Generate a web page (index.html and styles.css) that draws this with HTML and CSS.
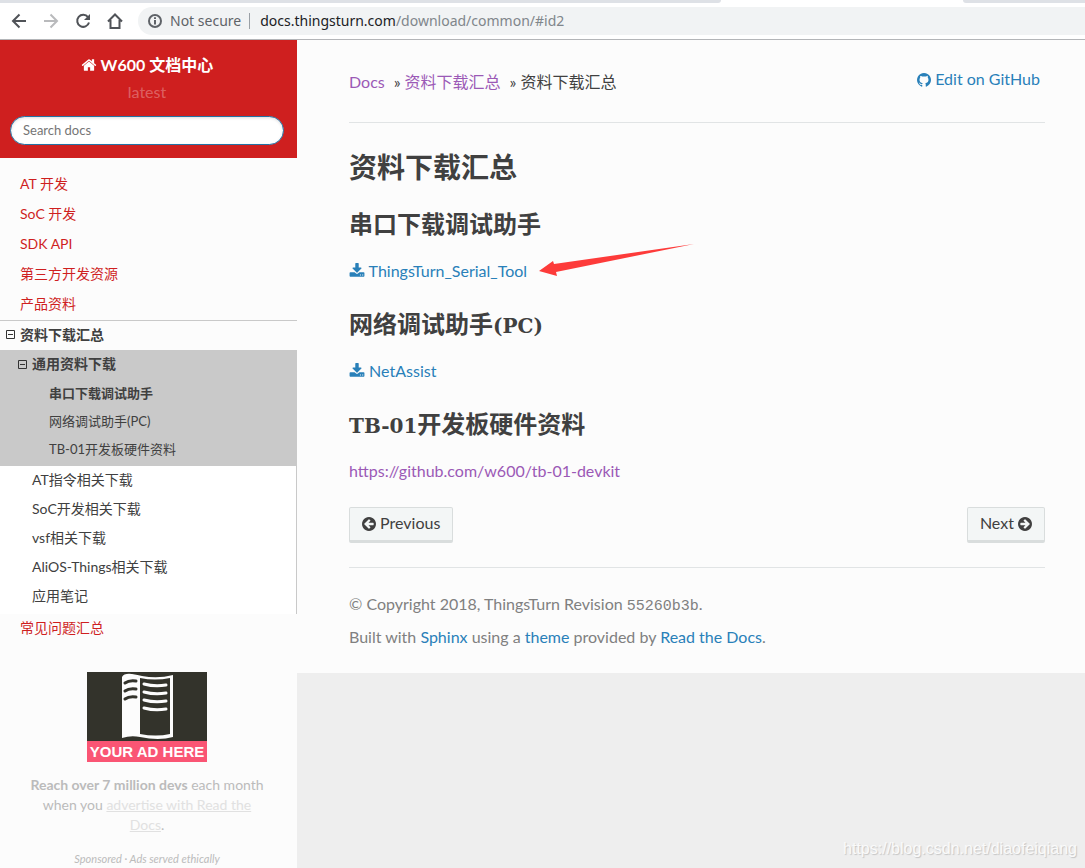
FILE: index.html
```html
<!DOCTYPE html>
<html lang="zh-CN">
<head>
<meta charset="utf-8">
<title>资料下载汇总 — W600 文档中心</title>
<link rel="stylesheet" href="styles.css">
</head>
<body>
<svg class="defs" aria-hidden="true">
  <symbol id="download" viewBox="0 0 1792 1792"><path d="M1344 1344q0-26-19-45t-45-19-45 19-19 45 19 45 45 19 45-19 19-45zm256 0q0-26-19-45t-45-19-45 19-19 45 19 45 45 19 45-19 19-45zm128-224v320q0 40-28 68t-68 28h-1472q-40 0-68-28t-28-68v-320q0-40 28-68t68-28h465l135 136q58 56 136 56t136-56l136-136h464q40 0 68 28t28 68zm-325-569q17 41-14 70l-448 448q-18 19-45 19t-45-19l-448-448q-31-29-14-70 17-39 59-39h256v-448q0-26 19-45t45-19h256q26 0 45 19t19 45v448h256q42 0 59 39z"/></symbol>
  <symbol id="circle-left" viewBox="128 128 1536 1536"><path d="M1408 960v-128q0-26-19-45t-45-19h-502l189-189q19-19 19-45t-19-45l-91-91q-18-18-45-18t-45 18l-362 362-91 91q-18 18-18 45t18 45l91 91 362 362q18 18 45 18t45-18l91-91q18-18 18-45t-18-45l-189-189h502q26 0 45-19t19-45zm256-64q0 209-103 385.5t-279.5 279.5-385.5 103-385.5-103-279.5-279.5-103-385.5 103-385.5 279.5-279.5 385.5-103 385.5 103 279.5 279.5 103 385.5z"/></symbol>
  <symbol id="minus" viewBox="0 0 9 9"><path d="M.5.5h8v8h-8zM2 4.500h5" fill="none" stroke="currentColor"/></symbol>
</svg>

<header class="browser">
  <div class="tabs"><span class="tab-left"></span><span class="tab-right"></span></div>
  <div class="toolbar">
    <button class="tool" aria-label="Back"><svg viewBox="0 0 16 16"><path d="M15 8H2.500M8.500 1.500 2 8l6.500 6.500"/></svg></button>
    <button class="tool tool-off" aria-label="Forward" disabled><svg viewBox="0 0 16 16"><path d="M1 8h12.500M7.500 1.500 14 8l-6.500 6.500"/></svg></button>
    <button class="tool" aria-label="Reload"><svg viewBox="0 0 16 16"><path d="M13 4.200A6 6 0 1 0 14 9.500"/><path class="solid" d="M15 1v6H9z"/></svg></button>
    <button class="tool" aria-label="Home"><svg viewBox="0 0 16 16"><path d="M1 8.500 8 1.500l7 7M3.500 7v8h9V7"/></svg></button>
    <div class="address">
      <svg class="info" viewBox="0 0 14 14"><circle cx="7" cy="7" r="6"/><path d="M7 6v4.500M7 3.300v1.700"/></svg>
      <span>Not secure</span>
      <span class="bar"></span>
      <span class="url"><b>docs.thingsturn.com</b>/download/common/#id2</span>
    </div>
  </div>
</header>

<div class="page">
  <nav class="side">
    <div class="side-head">
      <a class="brand" href="#"><svg class="home" viewBox="0 0 1792 1792"><path d="M1472 992v480q0 26-19 45t-45 19h-384v-384h-256v384h-384q-26 0-45-19t-19-45v-480q0-1 .5-3t.5-3l575-474 575 474q1 2 1 6zm223-69l-62 74q-8 9-21 11h-3q-13 0-21-7l-692-577-692 577q-12 8-24 7-13-2-21-11l-62-74q-8-10-7-23.500t11-21.500l719-599q32-26 76-26t76 26l244 204v-195q0-14 9-23t23-9h192q14 0 23 9t9 23v408l219 182q10 8 11 21.500t-7 23.500z"/></svg> W600 文档中心</a>
      <div class="version">latest</div>
      <input class="search" type="text" placeholder="Search docs" aria-label="Search docs">
    </div>
    <ul class="menu">
      <li><a href="#">AT 开发</a></li>
      <li><a href="#">SoC 开发</a></li>
      <li><a href="#">SDK API</a></li>
      <li><a href="#">第三方开发资源</a></li>
      <li><a href="#">产品资料</a></li>
      <li class="current">
        <a href="#"><svg class="fold"><use href="#minus"/></svg>资料下载汇总</a>
        <div class="open">
          <a class="level2" href="#"><svg class="fold"><use href="#minus"/></svg>通用资料下载</a>
          <ul class="level3">
            <li><a class="here" href="#">串口下载调试助手</a></li>
            <li><a href="#">网络调试助手(PC)</a></li>
            <li><a href="#">TB-01开发板硬件资料</a></li>
          </ul>
        </div>
        <ul class="rest">
          <li><a href="#">AT指令相关下载</a></li>
          <li><a href="#">SoC开发相关下载</a></li>
          <li><a href="#">vsf相关下载</a></li>
          <li><a href="#">AliOS-Things相关下载</a></li>
          <li><a href="#">应用笔记</a></li>
        </ul>
      </li>
      <li><a href="#">常见问题汇总</a></li>
    </ul>
    <div class="ad">
      <div class="ad-image">
        <svg viewBox="0 0 120 69"><path fill="#fcfcfc" d="M35 5Q37 1 45 2q6 1 10 2 16 3 31-1v62q-14 4-33 0-9-2-18 1z"/><path fill="#33332b" d="M53 6q15 3 30 0v56q-14 3-30 0z"/><path class="ink" d="M38 11q4-3 11-2M38 19q4-3 11-2M38 27q4-3 11-2"/><path class="ink light" d="M57 12q11 3 22 1M57 20q11 3 22 1M57 28q11 3 22 1M57 36q11 3 22 1"/></svg>
        <div class="ad-label">YOUR AD HERE</div>
      </div>
      <p class="ad-text"><b>Reach over 7 million devs</b> each month when you <a href="#">advertise with Read the Docs</a>.</p>
      <p class="ad-note">Sponsored · Ads served ethically</p>
    </div>
  </nav>

  <div class="main">
    <main class="content">
      <div class="crumbs">
        <div><a class="visited" href="#">Docs</a><i>»</i><a class="visited" href="#">资料下载汇总</a><i>»</i>资料下载汇总</div>
        <a class="edit" href="#"><svg class="round" viewBox="128 128 1536 1536"><path d="M896 128q209 0 385.500 103t279.500 279.500 103 385.500q0 251-146.500 451.500t-378.500 277.500q-27 5-40-7t-13-30q0-3 .5-76.500t.5-134.500q0-97-52-142 57-6 102.500-18t94-39 81-66.500 53-105 20.500-150.500q0-119-79-206 37-91-8-204-28-9-81 11t-92 44l-38 24q-93-26-192-26t-192 26q-16-11-42.500-27t-83.500-38.500-85-13.500q-45 113-8 204-79 87-79 206 0 85 20.500 150t52.500 105 80.500 67 94 39 102.500 18q-39 36-49 103-21 10-45 15t-57 5-65.500-21.500-55.500-62.500q-19-32-48.500-52t-49.500-24l-20-3q-21 0-29 4.500t-5 11.500 9 14 13 12l7 5q22 10 43.500 38t31.500 51l10 23q13 38 44 61.500t67 30 69.500 7 55.500-3.500l23-4q0 38 .5 88.500t.5 54.500q0 18-13 30t-40 7q-232-77-378.500-277.500t-146.500-451.500q0-209 103-385.500t279.500-279.500 385.500-103z"/></svg> Edit on GitHub</a>
      </div>
      <h1>资料下载汇总</h1>
      <h2>串口下载调试助手</h2>
      <p class="entry pointed"><a href="#"><svg class="dl"><use href="#download"/></svg> ThingsTurn_Serial_Tool</a>
        <svg class="arrow" viewBox="0 0 156 34"><path fill="#fd3b3a" d="M0 28 14 18l1 3L155 1 17 29l1 4z"/></svg>
      </p>
      <h2>网络调试助手<span class="slab">(PC)</span></h2>
      <p class="entry"><a href="#"><svg class="dl"><use href="#download"/></svg> NetAssist</a></p>
      <h2><span class="slab">TB-01</span>开发板硬件资料</h2>
      <p class="entry"><a class="visited" href="#">https://github.com/w600/tb-01-devkit</a></p>
      <div class="pager">
        <a class="btn" href="#"><svg class="round"><use href="#circle-left"/></svg> Previous</a>
        <a class="btn" href="#">Next <svg class="round flip"><use href="#circle-left"/></svg></a>
      </div>
      <footer class="foot">
        <p>© Copyright 2018, ThingsTurn Revision <code>55260b3b</code>.</p>
        <p>Built with <a href="#">Sphinx</a> using a <a href="#">theme</a> provided by <a href="#">Read the Docs</a>.</p>
      </footer>
    </main>
    <div class="watermark">https://blog.csdn.net/diaofeiqiang</div>
  </div>
</div>
</body>
</html>
```

FILE: styles.css
```css
* { box-sizing: border-box; }
body {
  margin: 0;
  min-height: 100vh;
  display: flex;
  flex-direction: column;
  background: #eee;
  color: #404040;
  font: 16px/24px Lato, "Noto Sans CJK SC", sans-serif;
}
a { color: #2980b9; text-decoration: none; }
p, h1, h2, ul { margin: 0; padding: 0; }
ul { list-style: none; }
svg { fill: currentColor; }
.defs { position: absolute; width: 0; height: 0; }

/* browser bar */
.browser { background: #fff; border-bottom: 1px solid #b3b5b8; overflow: hidden; }
.tabs { display: flex; justify-content: space-between; height: 3px; }
.tabs span { background: #dee1e6; }
.tab-left { width: 721px; border-bottom-right-radius: 6px; }
.tab-right { width: 122px; border-bottom-left-radius: 6px; }
.toolbar { display: flex; align-items: center; gap: 16px; padding: 4px 0 4px 11px; }
.tool { width: 16px; height: 16px; padding: 0; border: 0; background: none; color: #505358; }
.tool-off { color: #b9babc; }
.tool svg { display: block; width: 16px; height: 16px; fill: none; stroke: currentColor; stroke-width: 2; }
.tool .solid { fill: currentColor; stroke: none; }
.address {
  flex: 1;
  display: flex;
  align-items: center;
  gap: 8px;
  margin-left: -1px;
  height: 28px;
  padding-left: 10px;
  border-radius: 14px 0 0 14px;
  background: #f1f3f4;
  color: #5f6368;
  font: 14px/28px "Noto Sans", sans-serif;
}
.info { width: 14px; height: 14px; fill: none; stroke: #5f6368; stroke-width: 2; }
.bar { width: 1px; height: 16px; background: #9aa0a6; }
.url { padding-left: 2px; color: #80868b; }
.url b { font-weight: 400; color: #202124; }

.page { flex: 1; display: flex; }

/* sidebar */
.side { flex: none; width: 297px; background: #fcfcfc; font-size: 14px; }
.side-head {
  display: flex;
  flex-direction: column;
  align-items: center;
  padding: 13px 13px 13px 10px;
  background: #cf1f1f;
}
.brand { color: #fff; font-size: 16px; font-weight: 700; }
.home { width: 16px; height: 16px; vertical-align: -2px; }
.version { margin: 3px 0 12px; color: rgba(255, 255, 255, .3); font-size: 16px; }
.search {
  width: 100%;
  height: 29px;
  padding: 0 12px 2px;
  border: 1px solid #2472a4;
  border-radius: 15px;
  box-shadow: inset 0 1px 3px #ddd;
  font: 13px Lato, sans-serif;
}
.search::placeholder { color: #757575; }
.menu { padding-top: 12px; }
.menu a {
  display: flex;
  align-items: center;
  height: 30px;
  padding: 0 0 2px 20px;
  color: #cf1f1f;
  line-height: 18px;
}
.menu .current > a { border-top: 1px solid #c9c9c9; color: #404040; font-weight: 700; }
.fold { width: 9px; height: 9px; margin: 0 5px 0 -14px; color: #333; }
.open { padding-bottom: 2px; background: #c9c9c9; }
.menu .level2 { padding-left: 32px; color: #404040; font-weight: 700; }
.menu .level3 a { height: 28px; padding-left: 49px; color: #404040; font-size: 13px; }
.menu .level3 .here { font-weight: 700; }
.rest { padding-bottom: 3px; border-right: 1px solid #c9c9c9; background: #fff; }
.menu .rest a { height: 29px; padding-bottom: 1px; padding-left: 32px; color: #404040; }
.ad { padding: 28px 28px 0 25px; color: #bbb; line-height: 20px; text-align: center; }
.ad-image { width: 120px; margin: 0 auto 13px; background: #33332b; }
.ad-image svg { display: block; }
.ad-image .ink { fill: none; stroke: #33332b; stroke-width: 3; stroke-linecap: round; }
.ad-image .light { stroke: #fcfcfc; }
.ad-label { background: #fa5574; color: #fff; font: 700 15px/21px "Liberation Sans", sans-serif; white-space: nowrap; }
.ad-text a { color: #e1e1e1; text-decoration: underline; }
.ad-note { margin-top: 15px; font-size: 11px; font-style: italic; line-height: 18px; }

/* document */
.main { flex: 1; position: relative; }
.content { padding: 28px 40px 24px 52px; background: #fcfcfc; }
.crumbs {
  display: flex;
  justify-content: space-between;
  height: 55px;
  padding-top: 2px;
  border-bottom: 1px solid #e1e4e5;
}
.crumbs i { margin: 0 4px 0 9px; font-style: normal; }
.edit { margin-top: -3px; padding-right: 5px; }
.visited { color: #9b59b6; }
.round { width: 14px; height: 14px; vertical-align: -2px; }
.flip { transform: scaleX(-1); }
.dl { width: 16px; height: 16px; vertical-align: -2px; }
h1, h2 { font-weight: 700; }
h1 { margin: 26px 0 22px; font-size: 28px; line-height: 36px; }
h2 { margin-bottom: 18px; font-size: 24px; line-height: 34px; }
.slab { font-family: "DejaVu Serif", serif; font-size: 20px; line-height: 20px; }
.entry { margin-bottom: 24px; }
.pointed { position: relative; }
.arrow { position: absolute; left: 190px; top: -16px; width: 156px; height: 34px; }
.pager { display: flex; justify-content: space-between; padding-bottom: 24px; border-bottom: 1px solid #e1e4e5; }
.btn {
  padding: 3px 12px 5px;
  border: 1px solid #d9dddd;
  border-bottom-width: 3px;
  border-radius: 2px;
  background: #f3f6f6;
  color: #404040;
}
.foot { display: grid; gap: 9px; padding-top: 24px; color: #808080; }
code { font: 15px "Liberation Mono", monospace; }
.watermark {
  position: absolute;
  right: 8px;
  bottom: 8px;
  color: #fafafa;
  font: 16px/22px "Liberation Sans", sans-serif;
  text-shadow: 1px 1px 1px #c4c4c4;
}
```
